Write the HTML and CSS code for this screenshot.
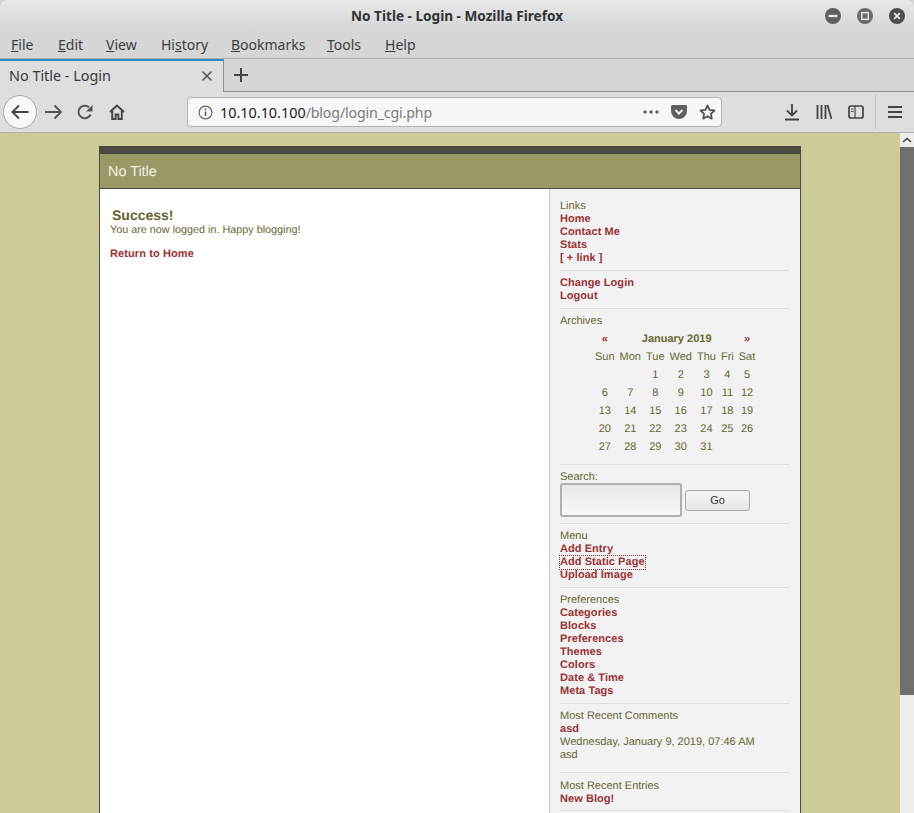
FILE: index.html
```html
<!DOCTYPE html>
<html lang="en">
<head>
    <meta charset="utf-8" />
    <title>No Title - Login - Mozilla Firefox</title>
    <link rel="stylesheet" href="styles.css">
</head>
<body>
<div class="titlebar">
    <span class="window-title">No Title - Login - Mozilla Firefox</span>
    <div class="window-buttons">
        <svg width="16" height="16" viewBox="0 0 16 16"><circle cx="8" cy="8" r="8" fill="#5f5f5f"/><rect x="3.5" y="6.8" width="9" height="2.4" fill="#e4e4e4"/></svg>
        <svg width="16" height="16" viewBox="0 0 16 16"><circle cx="8" cy="8" r="8" fill="#6a6a6a"/><rect x="4.7" y="4.7" width="6.6" height="6.6" fill="none" stroke="#dcdcdc" stroke-width="1.6"/></svg>
        <svg width="16" height="16" viewBox="0 0 16 16"><circle cx="8" cy="8" r="8" fill="#4e4e4e"/><path d="M5.2 5.2l5.6 5.6M10.8 5.2l-5.6 5.6" stroke="#e8e8e8" stroke-width="1.8"/></svg>
    </div>
</div>
<div class="menubar">
    <span><u>F</u>ile</span>
    <span><u>E</u>dit</span>
    <span><u>V</u>iew</span>
    <span>Hi<u>s</u>tory</span>
    <span><u>B</u>ookmarks</span>
    <span><u>T</u>ools</span>
    <span><u>H</u>elp</span>
</div>
<div class="tabbar">
    <div class="tab">
        <span class="tab-title">No Title - Login</span>
        <svg width="12" height="12" viewBox="0 0 12 12"><path d="M1.5 1.5l9 9M10.5 1.5l-9 9" stroke="#555" stroke-width="1.5"/></svg>
    </div>
    <svg class="new-tab" width="16" height="16" viewBox="0 0 16 16"><path d="M8 1v14M1 8h14" stroke="#444" stroke-width="2"/></svg>
</div>
<div class="navbar">
    <div class="back-button">
        <svg width="18" height="16" viewBox="0 0 18 16"><path d="M8 1.5L1.5 8 8 14.5M2 8h15.5" fill="none" stroke="#444" stroke-width="1.9"/></svg>
    </div>
    <svg class="nav-icon forward" width="17" height="16" viewBox="0 0 17 16"><path d="M9.5 1.5L16 8 9.5 14.5M15.5 8H0" fill="none" stroke="#555" stroke-width="1.9"/></svg>
    <svg class="nav-icon reload" width="16" height="16" viewBox="0 0 16 16"><path d="M13.6 10.5A6.3 6.3 0 1 1 12.2 3.4" fill="none" stroke="#555" stroke-width="2"/><path d="M15.5 1v6.5H9z" fill="#555"/></svg>
    <svg class="nav-icon home" width="16" height="16" viewBox="0 0 16 16"><path d="M1 8l7-6.5L15 8M3.2 6.5V15h3.4v-4.5h2.8V15h3.4V6.5" fill="none" stroke="#444" stroke-width="1.9"/></svg>
    <div class="urlbar">
        <svg class="info" width="15" height="15" viewBox="0 0 15 15"><circle cx="7.5" cy="7.5" r="6.4" fill="none" stroke="#666" stroke-width="1.2"/><path d="M7.5 6.5v4.5" stroke="#555" stroke-width="1.4"/><circle cx="7.5" cy="4.4" r="0.9" fill="#555"/></svg>
        <span class="url"><span class="url-host">10.10.10.100</span>/blog/login_cgi.php</span>
        <svg class="url-dots" width="16" height="4" viewBox="0 0 16 4"><circle cx="2" cy="2" r="1.7" fill="#666"/><circle cx="8" cy="2" r="1.7" fill="#666"/><circle cx="14" cy="2" r="1.7" fill="#666"/></svg>
        <svg class="pocket" width="16" height="14" viewBox="0 0 16 14"><path d="M1.5 0h13A1.5 1.5 0 0 1 16 1.5V6A8 8 0 0 1 0 6V1.5A1.5 1.5 0 0 1 1.5 0z" fill="#5f5f5f"/><path d="M4.5 5L8 8.5 11.5 5" fill="none" stroke="#f2f2f2" stroke-width="2"/></svg>
        <svg class="star" width="17" height="16" viewBox="0 0 17 16"><path d="M8.5 1.5l2.1 4.4 4.9.6-3.6 3.3.9 4.8-4.3-2.4-4.3 2.4.9-4.8L1.5 6.5l4.9-.6z" fill="none" stroke="#555" stroke-width="1.8" stroke-linejoin="round"/></svg>
    </div>
    <div class="toolbar-right">
        <svg width="16" height="17" viewBox="0 0 16 17"><path d="M8 0v11M3 6.5L8 11.5l5-5M1 15.5h14" fill="none" stroke="#444" stroke-width="1.8"/></svg>
        <svg width="16" height="16" viewBox="0 0 16 16"><path d="M1.5 1v14M5.5 1v14M9.5 1v14M11.5 1l4 14" fill="none" stroke="#444" stroke-width="1.8"/></svg>
        <svg width="16" height="14" viewBox="0 0 16 14"><rect x="1" y="1" width="14" height="12" rx="2" fill="none" stroke="#444" stroke-width="1.7"/><path d="M7 1v12M3 4h2.5M3 6.5h2.5" fill="none" stroke="#444" stroke-width="1.2"/></svg>
        <span class="toolbar-sep"></span>
        <svg width="14" height="12" viewBox="0 0 14 12"><path d="M0 1h14M0 6h14M0 11h14" stroke="#444" stroke-width="1.8"/></svg>
    </div>
</div>
<div class="viewport">
    <div class="page">
        <div class="container">
            <div class="banner">No Title</div>
            <div class="columns">
                <div class="main">
                    <h2>Success!</h2>
                    <p>You are now logged in. Happy blogging!</p>
                    <p class="return"><a href="#">Return to Home</a></p>
                </div>
                <div class="sidebar">
                    <div class="block first">
                        <div>Links</div>
                        <a href="#">Home</a>
                        <a href="#">Contact Me</a>
                        <a href="#">Stats</a>
                        <a href="#">[ + link ]</a>
                    </div>
                    <div class="block">
                        <a href="#">Change Login</a>
                        <a href="#">Logout</a>
                    </div>
                    <div class="block calendar-block">
                        <div>Archives</div>
                        <table class="calendar">
                            <tr class="month">
                                <td><a href="#">«</a></td>
                                <td colspan="5">January 2019</td>
                                <td><a href="#">»</a></td>
                            </tr>
                            <tr><td>Sun</td><td>Mon</td><td>Tue</td><td>Wed</td><td>Thu</td><td>Fri</td><td>Sat</td></tr>
                            <tr><td></td><td></td><td>1</td><td>2</td><td>3</td><td>4</td><td>5</td></tr>
                            <tr><td>6</td><td>7</td><td>8</td><td>9</td><td>10</td><td>11</td><td>12</td></tr>
                            <tr><td>13</td><td>14</td><td>15</td><td>16</td><td>17</td><td>18</td><td>19</td></tr>
                            <tr><td>20</td><td>21</td><td>22</td><td>23</td><td>24</td><td>25</td><td>26</td></tr>
                            <tr><td>27</td><td>28</td><td>29</td><td>30</td><td>31</td><td></td><td></td></tr>
                        </table>
                    </div>
                    <div class="block search-block">
                        <div>Search:</div>
                        <form class="search">
                            <input type="text" />
                            <button type="button">Go</button>
                        </form>
                    </div>
                    <div class="block">
                        <div>Menu</div>
                        <a href="#">Add Entry</a>
                        <a href="#" class="focused">Add Static Page</a>
                        <a href="#">Upload Image</a>
                    </div>
                    <div class="block">
                        <div>Preferences</div>
                        <a href="#">Categories</a>
                        <a href="#">Blocks</a>
                        <a href="#">Preferences</a>
                        <a href="#">Themes</a>
                        <a href="#">Colors</a>
                        <a href="#">Date &amp; Time</a>
                        <a href="#">Meta Tags</a>
                    </div>
                    <div class="block comments">
                        <div>Most Recent Comments</div>
                        <a href="#">asd</a>
                        <div>Wednesday, January 9, 2019, 07:46 AM</div>
                        <div>asd</div>
                    </div>
                    <div class="block entries">
                        <div>Most Recent Entries</div>
                        <a href="#">New Blog!</a>
                    </div>
                </div>
            </div>
        </div>
    </div>
    <div class="scrollbar">
        <div class="scroll-up">
            <svg width="10" height="6" viewBox="0 0 10 6"><path d="M1 5l4-3.5L9 5" fill="none" stroke="#444" stroke-width="1.6"/></svg>
        </div>
        <div class="scroll-thumb"></div>
    </div>
</div>
</body>
</html>
```

FILE: styles.css
```css
html, body {
    height: 813px; margin: 0; padding: 0; overflow: hidden;
}
body {
    display: flex; flex-direction: column;
    font-family: "Noto Sans", "Open Sans", sans-serif;
    color: #3a3a3a; background-color: #d6d6d6;
}

/* browser chrome */
.titlebar {
    height: 30px; display: flex; align-items: center; justify-content: center;
    position: relative; border-radius: 8px 8px 0 0;
    background: linear-gradient(#e8e8e8, #d6d6d6);
}
.window-title { font-size: 13.6px; font-weight: 700; color: #2e3436; }
.window-buttons {
    position: absolute; top: 8px; right: 9px;
    display: flex; gap: 16px;
}
.menubar {
    height: 28px; padding-left: 11px; align-items: center;
    display: grid; grid-template-columns: 47px 48px 55px 70px 96px 58px auto;
    font-size: 14px; color: #3a3f41;
    border-bottom: 1px solid #b3b3b3;
}
.tabbar {
    height: 32px; display: flex; align-items: center;
    background-color: #d6d6d6; border-bottom: 1px solid #8e8e8e;
}
.tab {
    width: 224px; height: 33px; box-sizing: border-box; margin-top: 1px;
    padding: 0 10px 2px 9px;
    display: flex; align-items: center; justify-content: space-between;
    background-color: #dedede; border-top: 2px solid #2a8ac6;
    border-right: 1px solid #8e8e8e;
    font-size: 14.4px; color: #3a3a3a;
}
.new-tab { margin-left: 9px; margin-top: -1px; }
.navbar {
    height: 40px; display: flex; align-items: center;
    background-color: #dedede; border-bottom: 1px solid #b0b0b0;
}
.back-button {
    width: 32px; height: 32px; margin-left: 3px;
    display: flex; align-items: center; justify-content: center;
    background-color: #f8f8f8; border: 1px solid #a8a8a8; border-radius: 50%;
}
.forward { margin-left: 8px; }
.reload { margin-left: 15px; }
.home { margin-left: 16px; }
.urlbar {
    width: 535px; height: 30px; box-sizing: border-box; margin-left: 62px;
    display: flex; align-items: center; padding: 0 5px 0 10px;
    background-color: #f7f7f7; border: 1px solid #b4b4b4; border-radius: 4px;
}
.url {
    flex: 1; margin-left: 7px; font-size: 14.2px; letter-spacing: -0.15px;
    color: #7c7c7c; white-space: nowrap;
}
.url-host { font-size: 14.4px; letter-spacing: 0; color: #222; }
.url-dots { margin-right: 12px; }
.pocket { margin-right: 12px; }
.toolbar-right {
    margin-left: 62px; display: flex; align-items: center; gap: 16px;
}
.toolbar-sep {
    width: 1px; height: 34px; margin: 0 -4px 0 -5px; background-color: #c2c2c2;
}

/* the blog page */
.viewport { flex: 1; display: flex; min-height: 0; }
.page {
    flex: 1; padding-top: 13px; overflow: hidden;
    background-color: #cccc99; text-rendering: geometricPrecision;
    font: 11px/13px "Liberation Sans", Arial, sans-serif; color: #666633;
}
.container {
    width: 700px; margin: 0 auto;
    border: 1px solid #4a4a40; border-top-width: 8px; border-bottom: 0;
    background-color: #fff;
}
.banner {
    height: 33px; padding: 1px 0 0 8px; line-height: 34px;
    font-size: 14.4px; color: #f2f2e6;
    background-color: #999966; border-bottom: 1px solid #4a4a40;
}
.columns { display: flex; align-items: flex-start; }
.main { flex: 1; padding: 18px 10px; }
.main h2 { margin: 0 0 1px 2px; font-size: 14px; line-height: 16px; color: #666633; }
.main p { margin: 0; font-size: 10.8px; }
.main .return { margin-top: 11px; font-size: 11px; }
a:link, a:visited { color: #993333; font-weight: bold; letter-spacing: 0.06px; text-decoration: none; }
.main .return a { letter-spacing: 0.1px; }
.sidebar {
    width: 229px; padding: 0 11px 0 10px; min-height: 700px; flex: none;
    background-color: #f2f2f2; border-left: 1px solid #ccc;
}
.block { padding: 6px 0 5px; border-bottom: 1px solid #ddd; }
.block.first { padding-top: 11px; }
.block a { display: block; width: fit-content; }
.block a.focused { outline: 1px dotted #993333; }
.block.search-block { padding-bottom: 6px; }
.block.comments { padding-bottom: 10px; }
.block.entries { padding: 7px 0 4px; }
.calendar-block { padding-bottom: 7px; }
.calendar { margin: 1px 0 0 32px; border-spacing: 1px 2px; }
.calendar td { height: 16px; padding: 0 2px; text-align: center; }
.calendar .month td { font-weight: bold; }
.block .calendar a { display: inline; }
.search { margin: -1px 0 0; display: flex; align-items: center; gap: 3px; }
.search input {
    width: 122px; height: 34px; box-sizing: border-box; margin: 0;
    background: linear-gradient(#e9e9e9, #f7f7f7);
    border: 2px solid #b0b0b0; border-radius: 3px;
}
.search button {
    width: 65px; height: 21px; margin: 0; padding: 0;
    font: 11px "Liberation Sans", Arial, sans-serif; color: #333;
    background: linear-gradient(#f6f6f6, #e6e6e6);
    border: 1px solid #a9a9a9; border-radius: 3px;
}
.scrollbar { width: 14px; flex: none; background-color: #ededed; }
.scroll-up { height: 14px; display: flex; align-items: center; justify-content: center; }
.scroll-thumb { height: 548px; background-color: #6f6f6f; }
```
